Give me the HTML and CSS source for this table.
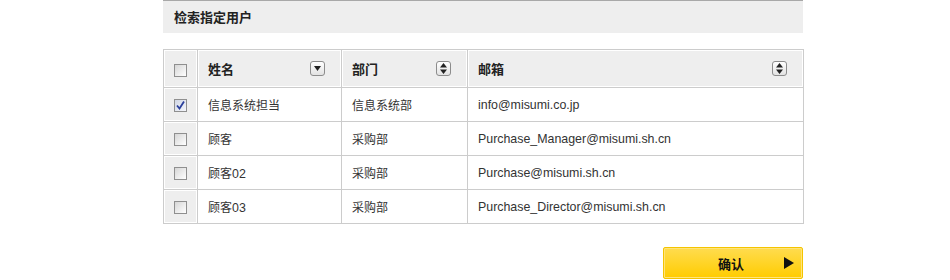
FILE: index.html
```html
<!DOCTYPE html>
<html lang="zh">
<head>
<meta charset="utf-8">
<link rel="stylesheet" href="styles.css">
</head>
<body>
<div class="wrap">
  <div class="titlebar">检索指定用户</div>
  <table class="grid">
    <colgroup>
      <col class="c1"><col class="c2"><col class="c3"><col class="c4">
    </colgroup>
    <thead>
      <tr>
        <th class="chk"><span class="cb"></span></th>
        <th><div class="hcell"><span>姓名</span><span class="sort">
          <svg width="7" height="5" viewBox="0 0 7 5"><path d="M0 0H7L3.5 5Z" fill="#222"/></svg></span></div></th>
        <th><div class="hcell"><span>部门</span><span class="sort">
          <svg width="7" height="11" viewBox="0 0 7 11"><path d="M0 4.5H7L3.5 0Z M0 6.5H7L3.5 11Z" fill="#222"/></svg></span></div></th>
        <th><div class="hcell"><span>邮箱</span><span class="sort">
          <svg width="7" height="11" viewBox="0 0 7 11"><path d="M0 4.5H7L3.5 0Z M0 6.5H7L3.5 11Z" fill="#222"/></svg></span></div></th>
      </tr>
    </thead>
    <tbody>
      <tr>
        <td class="chk"><span class="cb checked"><svg width="9" height="9" viewBox="0 0 9 9"><path d="M1 4.5L3.5 7.5L8 0.5" fill="none" stroke="#2a3f9c" stroke-width="1.8"/></svg></span></td>
        <td>信息系统担当</td><td>信息系统部</td><td class="mail">info@misumi.co.jp</td>
      </tr>
      <tr>
        <td class="chk"><span class="cb"></span></td>
        <td>顾客</td><td>采购部</td><td class="mail">Purchase_Manager@misumi.sh.cn</td>
      </tr>
      <tr>
        <td class="chk"><span class="cb"></span></td>
        <td>顾客<span class="num">02</span></td><td>采购部</td><td class="mail">Purchase@misumi.sh.cn</td>
      </tr>
      <tr>
        <td class="chk"><span class="cb"></span></td>
        <td>顾客<span class="num">03</span></td><td>采购部</td><td class="mail">Purchase_Director@misumi.sh.cn</td>
      </tr>
    </tbody>
  </table>
  <div class="actions">
    <button class="confirm"><span class="label">确认</span><span class="arrow"></span></button>
  </div>
</div>
</body>
</html>
```

FILE: styles.css
```css
html, body {
  margin: 0;
  padding: 0;
  background: #fff;
}
body {
  font-family: "Liberation Sans", Arial, "Noto Sans CJK SC", sans-serif;
  font-size: 12px;
  color: #333;
}
.wrap {
  width: 640px;
  margin-left: 163px;
}
.titlebar {
  height: 32px;
  border-top: 1px solid #a8a8a8;
  background: #eeeeee;
  font-weight: bold;
  font-size: 13px;
  line-height: 32px;
  padding-left: 11px;
  color: #222;
  font-family: "Noto Sans CJK SC", sans-serif;
}
.grid {
  margin-top: 16px;
  width: 640px;
  border-collapse: collapse;
  table-layout: fixed;
}
.c1 { width: 34px; }
.c2 { width: 144px; }
.c3 { width: 126px; }
.c4 { width: 336px; }
.grid th, .grid td {
  border: 1px solid #cccccc;
  padding: 0 0 0 10px;
  text-align: left;
}
.grid th {
  height: 37px;
  background: #eeeeee;
  box-shadow: inset 0 0 0 1px #fff;
  font-weight: bold;
  font-size: 13px;
  color: #222;
  font-family: "Noto Sans CJK SC", sans-serif;
}
.grid td {
  height: 33px;
  font-family: "Liberation Sans", Arial, "Noto Sans CJK SC", sans-serif;
}
.grid td.mail {
  font-size: 12.4px;
}
.num {
  font-size: 12.4px;
}
.grid .chk {
  padding: 0;
  text-align: center;
  background: #eeeeee;
  box-shadow: inset 0 0 0 1px #fff;
}
.hcell {
  display: flex;
  align-items: center;
  justify-content: space-between;
  padding-right: 16px;
}
.sort {
  box-sizing: border-box;
  width: 15px;
  height: 15px;
  border: 1px solid #8c8c8c;
  border-radius: 3px;
  background: linear-gradient(#ffffff, #e2e2e2);
  display: flex;
  align-items: center;
  justify-content: center;
}
.cb {
  box-sizing: border-box;
  display: inline-flex;
  align-items: center;
  justify-content: center;
  width: 13px;
  height: 13px;
  border: 1px solid #8f8f8f;
  background: linear-gradient(135deg, #d6d6d6, #ffffff);
  vertical-align: middle;
}
.cb.checked {
  background: linear-gradient(135deg, #d0d6e4, #f4f6fb);
}
.actions {
  display: flex;
  justify-content: flex-end;
  margin-top: 23px;
}
.confirm {
  box-sizing: border-box;
  width: 140px;
  height: 32px;
  border: 1px solid #f4c400;
  border-radius: 2px;
  box-shadow: inset 0 0 0 1px #ffe37a;
  background: linear-gradient(#ffdc4f, #ffcc00);
  display: flex;
  align-items: center;
  padding: 0 8px 0 0;
  font-family: "Noto Sans CJK SC", sans-serif;
  font-weight: bold;
  font-size: 13px;
  color: #111;
}
.confirm .label {
  flex: 1;
  text-align: center;
  padding-left: 14px;
}
.confirm .arrow {
  width: 0;
  height: 0;
  border-top: 6px solid transparent;
  border-bottom: 6px solid transparent;
  border-left: 10px solid #111;
}
```
